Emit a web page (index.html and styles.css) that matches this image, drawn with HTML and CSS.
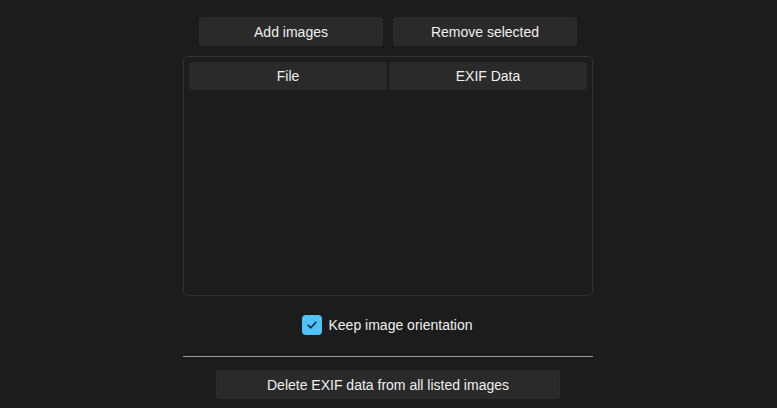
FILE: index.html
```html
<!DOCTYPE html>
<html>
<head>
<meta charset="utf-8">
<link rel="stylesheet" href="styles.css">
</head>
<body>
<div class="app">
  <div class="actions">
    <button class="btn btn-half">Add images</button>
    <button class="btn btn-half">Remove selected</button>
  </div>
  <div class="table">
    <div class="thead">
      <div class="th">File</div>
      <div class="th">EXIF Data</div>
    </div>
  </div>
  <label class="check">
    <span class="box"><svg width="12" height="12" viewBox="0 0 12 12"><path d="M2.2 6.3 L4.8 8.8 L9.8 3.4" fill="none" stroke="#1d2a33" stroke-width="1.6" stroke-linecap="round" stroke-linejoin="round"/></svg></span>
    <span class="check-text">Keep image orientation</span>
  </label>
  <div class="rule"></div>
  <button class="btn btn-wide">Delete EXIF data from all listed images</button>
</div>
</body>
</html>
```

FILE: styles.css
```css
html, body {
  margin: 0;
  padding: 0;
  background: #1c1c1c;
}
body {
  font-family: "Liberation Sans", Arial, sans-serif;
  font-size: 14px;
  color: #f0f0f0;
  padding-right: 1px;
}
.app {
  width: 410px;
  margin: 0 auto;
  padding-top: 17px;
  display: flex;
  flex-direction: column;
  align-items: center;
}
.actions {
  display: flex;
  gap: 10px;
}
.btn {
  font-family: inherit;
  font-size: 14px;
  color: #f0f0f0;
  background: #2a2a2a;
  border: 1px solid #2d2d2d;
  border-radius: 3px;
  height: 29px;
  padding: 0;
  box-sizing: border-box;
  cursor: pointer;
}
.btn-half {
  width: 184px;
}
.btn-wide {
  width: 344px;
  margin-top: 13px;
}
.table {
  margin-top: 10px;
  width: 410px;
  height: 240px;
  box-sizing: border-box;
  border: 1px solid #333333;
  border-radius: 5px;
  padding: 5px;
}
.thead {
  display: grid;
  grid-template-columns: 1fr 1fr;
  gap: 2px;
}
.th {
  height: 28px;
  background: #2a2a2a;
  border-radius: 3px;
  display: flex;
  align-items: center;
  justify-content: center;
}
.check {
  margin-top: 19px;
  margin-right: 2px;
  display: flex;
  align-items: center;
  gap: 7px;
  height: 20px;
}
.box {
  width: 20px;
  height: 20px;
  border-radius: 4px;
  background: #4fc3f7;
  display: flex;
  align-items: center;
  justify-content: center;
}
.rule {
  margin-top: 21px;
  width: 410px;
  height: 1px;
  background: #9a9a9a;
}
```
